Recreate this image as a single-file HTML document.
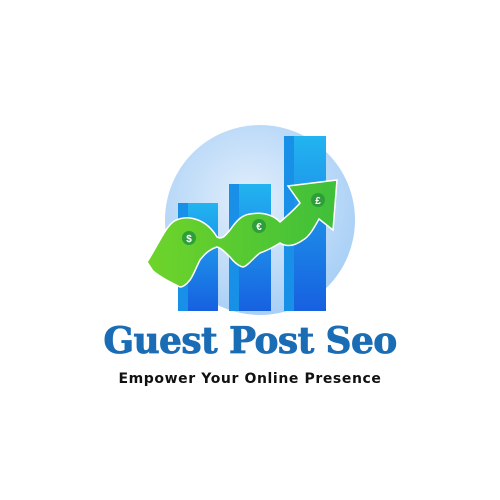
<!DOCTYPE html>
<html><head><style>
body{margin:0;width:500px;height:500px;background:#fff;position:relative;overflow:hidden}
.t{position:absolute;left:0;width:500px;text-align:center}
</style></head><body>
<svg width="500" height="500" style="position:absolute;left:0;top:0">
<defs>
<radialGradient id="c" cx="0.45" cy="0.4" r="0.6"><stop offset="0" stop-color="#e3effc"/><stop offset="1" stop-color="#a9d0f6"/></radialGradient>
<linearGradient id="b" x1="0" y1="0" x2="0" y2="1"><stop offset="0" stop-color="#22b4f0"/><stop offset="1" stop-color="#1760e0"/></linearGradient>
<linearGradient id="g" x1="0" y1="0" x2="1" y2="0"><stop offset="0" stop-color="#6fd42a"/><stop offset="1" stop-color="#3fbf3a"/></linearGradient>
</defs>
<circle cx="260" cy="220" r="95" fill="url(#c)"/>
<rect x="178" y="203" width="40" height="108" fill="url(#b)"/>
<rect x="178" y="203" width="10" height="108" fill="#1890e8"/>
<rect x="229" y="184" width="42" height="127" fill="url(#b)"/>
<rect x="229" y="184" width="10" height="127" fill="#1890e8"/>
<rect x="284" y="136" width="42" height="175" fill="url(#b)"/>
<rect x="284" y="136" width="10" height="175" fill="#1890e8"/>
<path d="M147 262 C158 245,165 228,173 222 C185 214,205 217,217 237 C222 240,225 236,230 230 C237 220,242 215,250 214 C262 212,272 214,280 222 C287 216,294 210,300 203 L288 186 L337 180 L333 230 L319 219 C314 228,309 237,303 240 C296 245,288 248,280 243 C272 248,266 251,260 253 C253 258,248 266,243 267 C238 266,234 262,230 257 C225 252,221 248,217 247 C208 250,204 255,200 260 C196 268,193 276,190 280 C186 285,183 287,180 287 C170 282,160 277,153 271 Z" fill="url(#g)" stroke="#fff" stroke-width="1.5"/>
<circle cx="189" cy="238" r="7" fill="#2e9e3a"/><text x="189" y="242" font-size="10" fill="#fff" text-anchor="middle" font-family="Liberation Sans" font-weight="bold">$</text>
<circle cx="259" cy="226" r="7" fill="#2e9e3a"/><text x="259" y="230" font-size="10" fill="#fff" text-anchor="middle" font-family="Liberation Sans" font-weight="bold">€</text>
<circle cx="318" cy="200" r="7" fill="#2e9e3a"/><text x="318" y="204" font-size="10" fill="#fff" text-anchor="middle" font-family="Liberation Sans" font-weight="bold">£</text>
</svg>
<div class="t" style="top:320px;font:bold 36px 'DejaVu Serif',serif;color:#1a6db5;letter-spacing:-0.6px;-webkit-text-stroke:0.8px #1a6db5">Guest Post Seo</div>
<div class="t" style="top:371px;font:bold 14px 'DejaVu Sans',sans-serif;color:#111;letter-spacing:0.6px">Empower Your Online Presence</div>
</body></html>
